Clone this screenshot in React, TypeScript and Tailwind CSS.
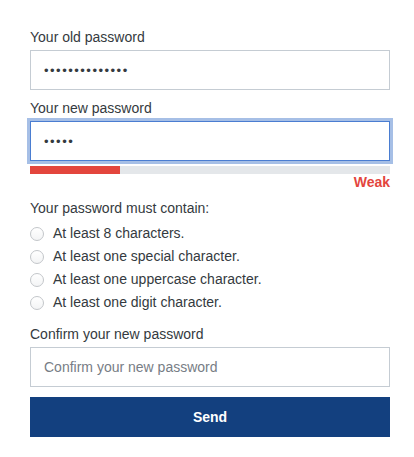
import React from 'react';

const rules = [
  'At least 8 characters.',
  'At least one special character.',
  'At least one uppercase character.',
  'At least one digit character.',
];

const App: React.FC = () => {
  return (
    <div
      className="min-h-[457px] bg-white pl-[30px] pr-[24px] pt-[27px] text-[14px] text-[#343a40]"
      style={{ fontFamily: '"Liberation Sans", Arial, sans-serif' }}
    >
      <form className="flex flex-col" onSubmit={(e) => e.preventDefault()}>
        {/* ancien mot de passe */}
        <label className="leading-[20px]">Your old password</label>
        <input
          type="password"
          defaultValue="abcdefghijklmn"
          readOnly
          className="mt-[3px] h-[40px] w-full border border-[#c5ccd3] bg-white px-[13px] text-[13px] tracking-[1.5px] text-[#343a40] outline-none"
        />

        {/* nouveau mot de passe */}
        <label className="mt-[8px] leading-[20px]">Your new password</label>
        <input
          type="password"
          defaultValue="abcde"
          readOnly
          className="mt-[3px] h-[40px] w-full border border-[#4a7dd1] bg-white px-[13px] text-[13px] tracking-[1.5px] text-[#343a40] outline-none ring-[3px] ring-[#a6bfe6]"
        />

        {/* force du mot de passe */}
        <div className="mt-[5px] h-[8px] w-full bg-[#e4e7ea]">
          <div className="h-full w-1/4 bg-[#e3453d]" />
        </div>
        <div className="text-right text-[14px] font-bold leading-[16px] text-[#e3453d]">Weak</div>

        <div className="mt-[8px] leading-[20px]">Your password must contain:</div>
        <ul className="mt-[4px] flex flex-col">
          {rules.map((rule) => (
            <li key={rule} className="flex h-[23px] items-center gap-[9px]">
              <span className="h-[14px] w-[14px] shrink-0 rounded-full border border-[#c3c6ca] bg-gradient-to-b from-white to-[#f3f4f5]" />
              <span>{rule}</span>
            </li>
          ))}
        </ul>

        {/* confirmation */}
        <label className="mt-[10px] leading-[20px]">Confirm your new password</label>
        <input
          type="password"
          placeholder="Confirm your new password"
          className="mt-[3px] h-[40px] w-full border border-[#c5ccd3] bg-white px-[13px] text-[14px] text-[#343a40] outline-none placeholder:text-[#777d85]"
        />

        <button
          type="submit"
          className="mt-[10px] h-[40px] w-full bg-[#13407f] text-[14px] font-bold text-white"
        >
          Send
        </button>
      </form>
    </div>
  );
};

export default App;
